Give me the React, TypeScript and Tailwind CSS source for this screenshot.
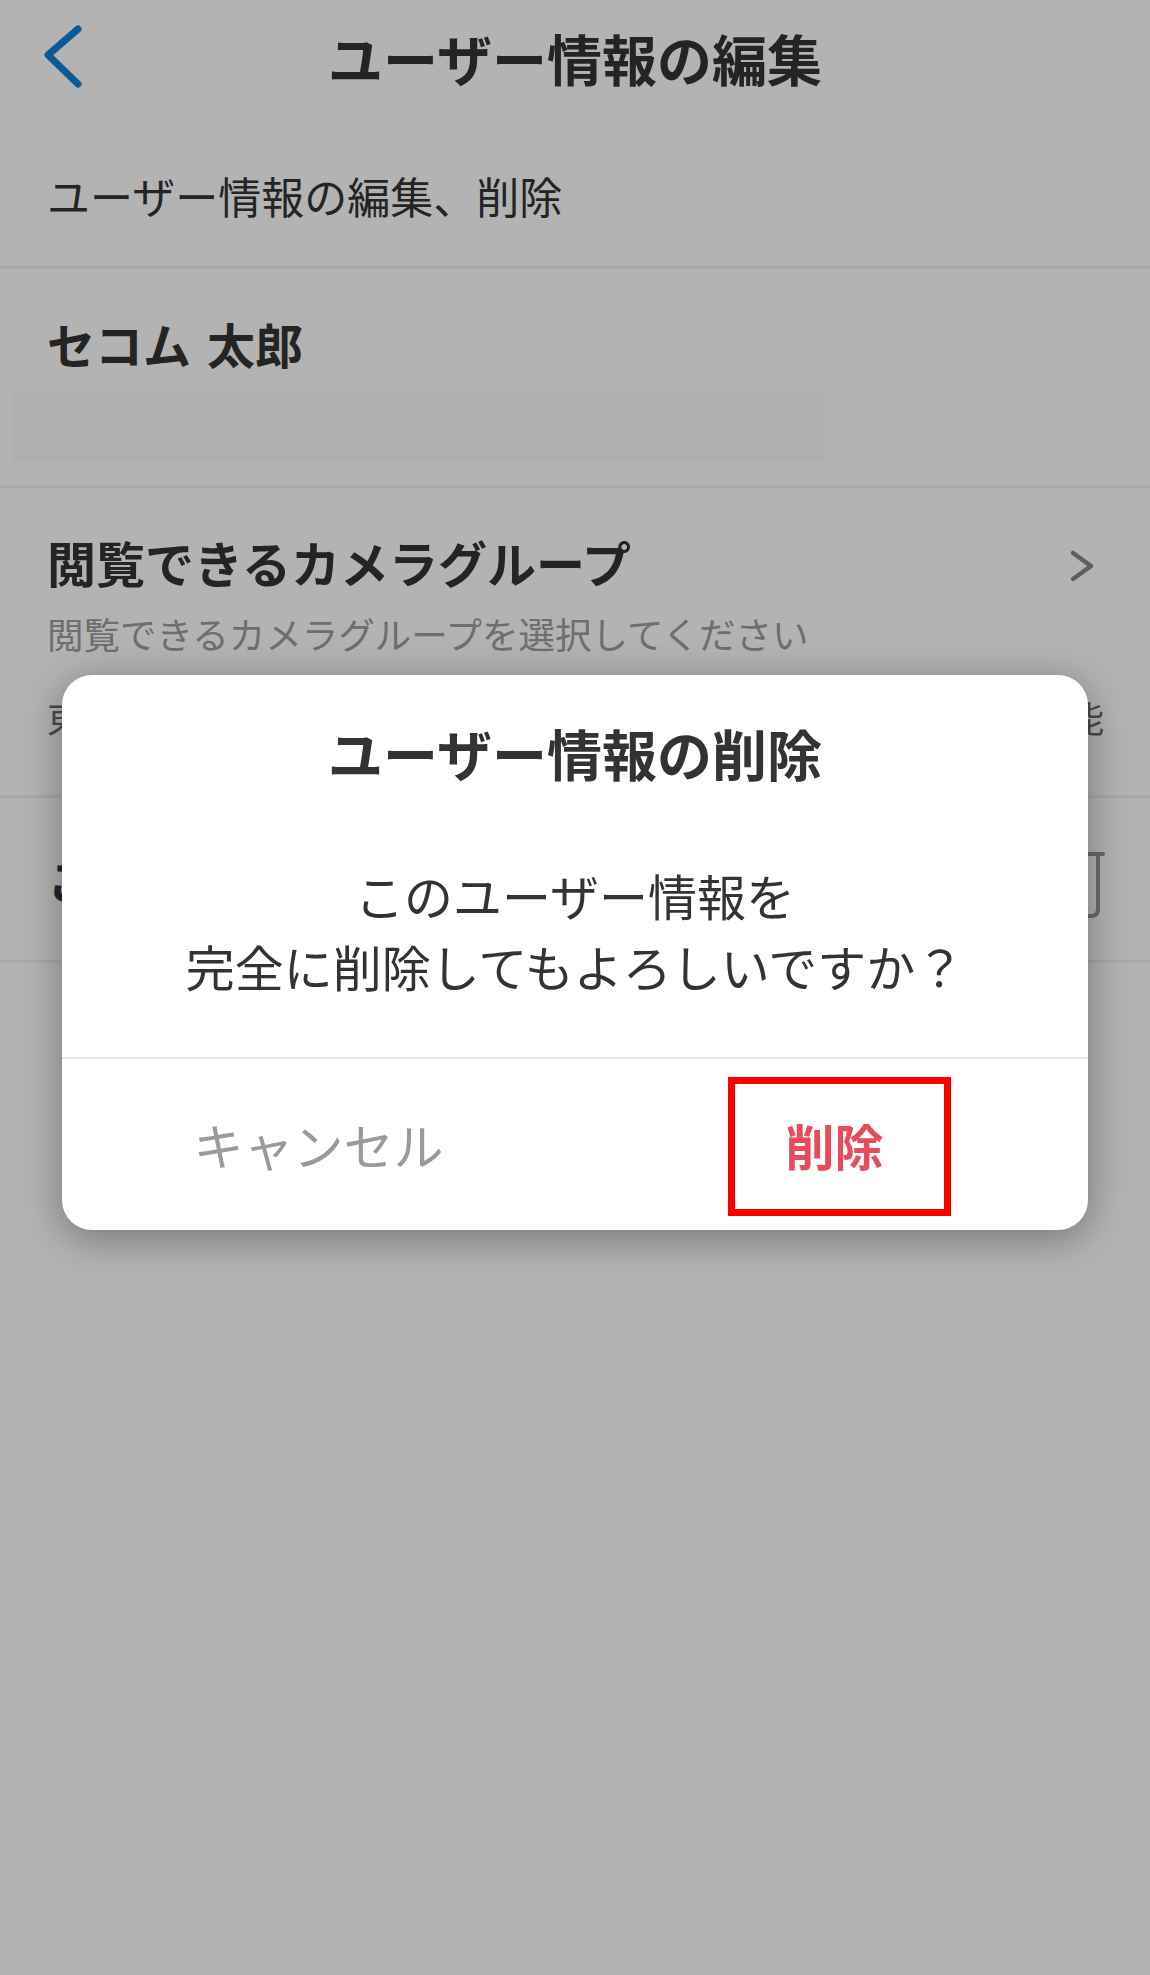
import React from "react";

const font = "font-['Noto_Sans_CJK_JP','Noto_Sans_CJK_SC',sans-serif]";

function BackIcon() {
    return (
        <svg width="50" height="80" viewBox="0 0 50 80" className="ml-[40px]">
            <polyline points="38,12 8,38 38,67" fill="none" stroke="#0b5a97" strokeWidth="7" strokeLinecap="round" strokeLinejoin="round"/>
        </svg>
    );
}

function ChevronRight() {
    return (
        <svg width="26" height="36" viewBox="0 0 26 36" className="mt-[10px]">
            <polyline points="4,4 22,17 4,30" fill="none" stroke="#5f5f5f" strokeWidth="4.5" strokeLinecap="round" strokeLinejoin="round"/>
        </svg>
    );
}

function TrashIcon() {
    return (
        <svg width="66" height="80" viewBox="0 0 66 80" fill="none" stroke="#6b6b6b" strokeWidth="4" strokeLinecap="round" strokeLinejoin="round">
            <path d="M2 15H64"/>
            <path d="M9 15V70Q9 77 16 77H52Q59 77 59 70V15"/>
            <path d="M23 15V8Q23 3 28 3H38Q43 3 43 8V15"/>
            <path d="M26 28V64M40 28V64"/>
        </svg>
    );
}

function Divider() {
    return <div className="h-[3px] w-full bg-[#a9a9a9]"/>;
}

export default function App() {
    return (
        <main className={`relative min-h-screen w-full bg-[#b3b3b3] text-[#242424] ${font}`}>
            {/* header */}
            <div className="grid h-[114px] grid-cols-[1fr_auto_1fr] items-center">
                <div className="flex items-center">
                    <BackIcon/>
                </div>
                <h1 className="text-[55px] font-bold leading-none">ユーザー情報の編集</h1>
                <div/>
            </div>
            <div className="h-[152px] pl-[47px] pt-[51px]">
                <p className="text-[43px] leading-[60px]">ユーザー情報の編集、削除</p>
            </div>
            <Divider/>

            {/* name */}
            <div className="flex flex-col pt-[44px] pb-[23px]">
                <p className="pl-[47px] text-[48px] font-bold leading-[60px]">
                    セコム<span className="inline-block w-[16px]"/>太郎
                </p>
                <div className="ml-[12px] mt-[19px] h-[70px] w-[813px] bg-[#afafaf]"/>
            </div>
            <Divider/>

            {/* camera group */}
            <div className="flex flex-col pl-[47px] pt-[44px] pb-[53px]">
                <div className="flex items-center justify-between pr-[55px]">
                    <p className="text-[49px] font-bold leading-[60px]">閲覧できるカメラグループ</p>
                    <ChevronRight/>
                </div>
                <p className="mt-[18px] text-[36.5px] leading-[48px] text-[#6e6e6e]">閲覧できるカメラグループを選択してください</p>
                <p className="mt-[36px] whitespace-nowrap text-[36.5px] leading-[48px] text-[#4a4a4a]">東京本社カメラ、大阪支社カメラ、名古屋支店カメラが閲覧可能</p>
            </div>
            <Divider/>

            {/* delete row */}
            <div className="flex h-[162px] items-center justify-between pl-[47px] pr-[45px]">
                <p className="text-[48px] font-bold leading-[60px]">このユーザーを削除する</p>
                <TrashIcon/>
            </div>
            <Divider/>

            {/* dialog */}
            <div className="absolute left-[62px] top-[675px] flex h-[555px] w-[1026px] flex-col rounded-[30px] bg-white shadow-[0_8px_40px_rgba(0,0,0,0.35)]">
                <h2 className="pt-[39px] text-center text-[55px] font-bold leading-[76px] text-[#333333]">ユーザー情報の削除</h2>
                <div className="flex flex-1 items-center justify-center pt-[12px]">
                    <p className="text-center text-[49px] leading-[71px] text-[#333333]">
                        このユーザー情報を<br/>完全に削除してもよろしいですか？
                    </p>
                </div>
                <div className="h-[2px] w-full bg-[#e6e6e6]"/>
                <div className="grid h-[171px] grid-cols-2">
                    <button className="text-[50px] text-[#9a9a9a]">キャンセル</button>
                    <button className="pl-[6px] text-[49px] font-bold text-[#e84c5a]">削除</button>
                </div>
                <div className="absolute left-[666px] top-[402px] h-[139px] w-[223px] border-[7px] border-[#ff0000]"/>
            </div>
        </main>
    );
}
